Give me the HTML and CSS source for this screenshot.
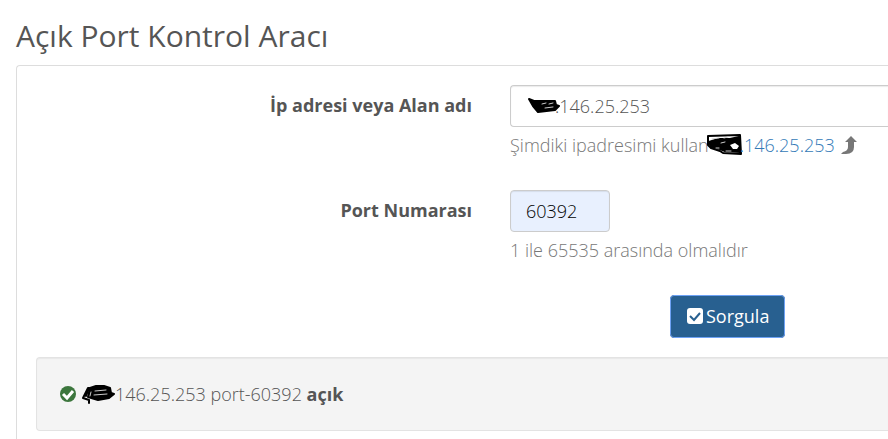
FILE: index.html
```html
<!DOCTYPE html>
<html lang="tr">
<head>
    <meta charset="UTF-8">
    <title>Açık Port Kontrol Aracı</title>
    <link rel="stylesheet" href="styles.css">
</head>
<body>

<h1>Açık Port Kontrol Aracı</h1>

<div class="panel">
    <form>
        <div class="form-group">
            <label for="host">İp adresi veya Alan adı</label>
            <div class="field">
                <div class="masked">
                    <input class="host" type="text" id="host" value=".146.25.253">
                    <svg class="scribble scribble-input" viewBox="0 0 32 16" width="32" height="16">
                        <path class="blot" d="M1 1L6 3L27 3L28 7L31 8L27 12L10 14L5 8Z"/>
                        <path class="gap" d="M14 6L18 5M21 6L25 5M17 10L25 9"/>
                    </svg>
                </div>
                <p class="help">Şimdiki ipadresimi kullan<svg class="scribble scribble-link" viewBox="0 0 37 22" width="37" height="22">
                        <path d="M2 2L34 1L35 20L17 19L14 17L5 14L2 11Z"/>
                        <path class="blot" d="M3 8L12 5L24 5L33 3L34 18L19 17L14 15L5 13Z"/>
                        <path class="gap" d="M6 5L13 4M18 4L22 3M15 9L19 8M20 17L25 17M10 14L13 14"/>
                        <path class="hole" d="M24 11L29 9L33 12L31 15L27 15Z"/>
                    </svg><a href="#">.146.25.253</a>
                    <svg class="arrow" viewBox="0 0 16 18" width="16" height="18">
                        <path d="M10 0L16 6H13V11Q13 18 5 18H0L2 16Q7 15 7 11V6H4Z"/>
                    </svg>
                </p>
            </div>
        </div>

        <div class="form-group">
            <label for="port">Port Numarası</label>
            <div class="field">
                <input class="port" type="text" id="port" value="60392">
                <p class="help">1 ile 65535 arasında olmalıdır</p>
            </div>
        </div>

        <div class="actions">
            <button type="button">
                <svg viewBox="0 0 16 16" width="16" height="16">
                    <rect width="16" height="16" rx="3" fill="#fff"/>
                    <path d="M3 8L7 12L13 5" fill="none" stroke="#286090" stroke-width="2"/>
                </svg>
                Sorgula
            </button>
        </div>
    </form>

    <!-- Sonuç -->
    <div class="well">
        <svg class="ok" viewBox="0 0 16 16" width="16" height="16">
            <circle cx="8" cy="8" r="8" fill="#3c763d"/>
            <path d="M3 8L7 12L13 5" fill="none" stroke="#fff" stroke-width="3"/>
        </svg>
        <svg class="scribble" viewBox="0 0 33 20" width="33" height="20">
            <path d="M6 4L1 14L7 16L7 19M7 4L4 12"/>
            <path class="blot" d="M8 4L14 2L22 2L28 4L29 9L32 10L27 14L16 16L6 13Z"/>
            <path class="gap" d="M13 7L24 6M12 11L25 10M9 8L8 12"/>
        </svg>
        <span>146.25.253 port-60392 <strong>açık</strong></span>
    </div>
</div>

</body>
</html>
```

FILE: styles.css
```css
* {
    box-sizing: border-box;
}
body {
    margin: 0;
    padding: 16px 0 0 16px;
    background-color: #fff;
    color: #555;
    font-family: "Open Sans", sans-serif;
    font-size: 18px;
    font-weight: 300;
    line-height: 26px;
}
h1 {
    margin: 0 0 9px;
    font-size: 30px;
    font-weight: 400;
    line-height: 40px;
}
.panel {
    padding: 19px 0 20px 19px;
    border: 1px solid #ddd;
    border-right: 0;
    border-radius: 4px 0 0 4px;
}
.form-group {
    display: grid;
    grid-template-columns: 436px 1fr;
    column-gap: 38px;
    margin-bottom: 32px;
}
label {
    padding-top: 7px;
    font-weight: 700;
    text-align: right;
}
input {
    display: block;
    height: 42px;
    padding: 6px 15px;
    border: 1px solid #ccc;
    border-radius: 4px;
    background-color: #fff;
    box-shadow: inset 0 1px 1px rgba(0, 0, 0, 0.08);
    color: #555;
    font: inherit;
}
.host {
    width: 100%;
    padding-left: 44px;
    border-right: 0;
    border-radius: 4px 0 0 4px;
}
.port {
    width: 100px;
    background-color: #e8f0fe;
    color: #000;
}
.help {
    display: flex;
    align-items: center;
    margin: 5px 0 0;
    color: #777;
}
a {
    color: #337ab7;
    text-decoration: none;
}
.arrow {
    margin-left: 6px;
    fill: #777;
}

/* Gizlenen rakamların üstündeki karalama */
.masked {
    position: relative;
}
.scribble {
    flex: none;
    fill: none;
    stroke: #000;
    stroke-width: 2;
    stroke-linecap: round;
    stroke-linejoin: round;
}
.scribble .blot {
    fill: #000;
}
.scribble .gap {
    stroke: #ccc;
    stroke-width: 1;
}
.scribble .hole {
    fill: #fff;
    stroke: none;
}
.scribble-input {
    position: absolute;
    top: 13px;
    left: 18px;
}
.scribble-link {
    margin: 0 -3px;
}

.actions {
    padding-left: 634px;
}
button {
    display: flex;
    align-items: center;
    gap: 3px;
    height: 43px;
    padding: 0 15px 2px 16px;
    border: 1px solid #204d74;
    border-radius: 4px;
    outline: 1px solid #6ea2f5;
    outline-offset: -1px;
    background-color: #286090;
    color: #fff;
    font: inherit;
    font-weight: 400;
}
.well {
    display: flex;
    align-items: center;
    margin-top: 19px;
    padding: 23px;
    border: 1px solid #e3e3e3;
    border-right: 0;
    border-radius: 4px 0 0 4px;
    background-color: #f4f4f4;
    box-shadow: inset 0 1px 1px rgba(0, 0, 0, 0.05);
}
.ok {
    flex: none;
    margin-right: 6px;
}
strong {
    font-weight: 700;
}
```
